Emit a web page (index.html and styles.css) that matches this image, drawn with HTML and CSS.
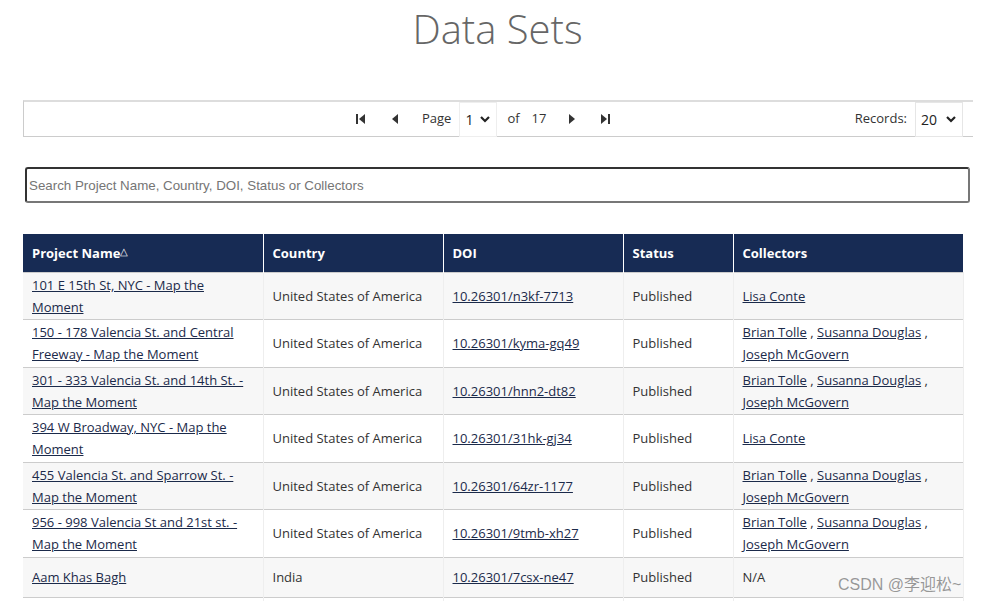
FILE: index.html
```html
<!DOCTYPE html>
<html>
<head>
<meta charset="utf-8">
<link rel="stylesheet" href="styles.css">
</head>
<body>
<div class="page">
  <h1 class="title">Data Sets</h1>
  <div class="pager">
    <div class="pager-center">
      <span class="pbtn"><svg width="10" height="10" viewBox="0 0 10 10"><rect x="0" y="0" width="2" height="10" fill="#333"/><polygon points="9,0 9,10 3,5" fill="#333"/></svg></span>
      <span class="pbtn"><svg width="7" height="10" viewBox="0 0 7 10"><polygon points="6,0 6,10 0,5" fill="#333"/></svg></span>
      <span class="plabel page-label">Page</span>
      <span class="psel">1<svg class="chev" width="10" height="7" viewBox="0 0 10 7"><polyline points="1,1 5,5 9,1" fill="none" stroke="#222" stroke-width="2.2"/></svg></span>
      <span class="plabel of-label">of</span>
      <span class="plabel num">17</span>
      <span class="pbtn"><svg width="7" height="10" viewBox="0 0 7 10"><polygon points="1,0 1,10 7,5" fill="#333"/></svg></span>
      <span class="pbtn"><svg width="10" height="10" viewBox="0 0 10 10"><polygon points="1,0 1,10 7,5" fill="#333"/><rect x="8" y="0" width="2" height="10" fill="#333"/></svg></span>
    </div>
    <div class="records">
      <span class="plabel">Records:</span>
      <span class="psel rsel">20<svg class="chev" width="10" height="7" viewBox="0 0 10 7"><polyline points="1,1 5,5 9,1" fill="none" stroke="#222" stroke-width="2.2"/></svg></span>
    </div>
  </div>
  <input class="search" type="text" placeholder="Search Project Name, Country, DOI, Status or Collectors">
  <table class="grid">
    <thead>
      <tr>
        <th class="c1">Project Name<span class="sort">&#9651;</span></th>
        <th class="c2">Country</th>
        <th class="c3">DOI</th>
        <th class="c4">Status</th>
        <th class="c5">Collectors</th>
      </tr>
    </thead>
    <tbody>
      <tr class="odd">
        <td><a href="#">101 E 15th St, NYC - Map the Moment</a></td>
        <td>United States of America</td>
        <td><a href="#">10.26301/n3kf-7713</a></td>
        <td>Published</td>
        <td><a href="#">Lisa Conte</a></td>
      </tr>
      <tr>
        <td><a href="#">150 - 178 Valencia St. and Central Freeway - Map the Moment</a></td>
        <td>United States of America</td>
        <td><a href="#">10.26301/kyma-gq49</a></td>
        <td>Published</td>
        <td><a href="#">Brian Tolle</a> , <a href="#">Susanna Douglas</a> , <a href="#">Joseph McGovern</a></td>
      </tr>
      <tr class="odd">
        <td><a href="#">301 - 333 Valencia St. and 14th St. - Map the Moment</a></td>
        <td>United States of America</td>
        <td><a href="#">10.26301/hnn2-dt82</a></td>
        <td>Published</td>
        <td><a href="#">Brian Tolle</a> , <a href="#">Susanna Douglas</a> , <a href="#">Joseph McGovern</a></td>
      </tr>
      <tr>
        <td><a href="#">394 W Broadway, NYC - Map the Moment</a></td>
        <td>United States of America</td>
        <td><a href="#">10.26301/31hk-gj34</a></td>
        <td>Published</td>
        <td><a href="#">Lisa Conte</a></td>
      </tr>
      <tr class="odd">
        <td><a href="#">455 Valencia St. and Sparrow St. - Map the Moment</a></td>
        <td>United States of America</td>
        <td><a href="#">10.26301/64zr-1177</a></td>
        <td>Published</td>
        <td><a href="#">Brian Tolle</a> , <a href="#">Susanna Douglas</a> , <a href="#">Joseph McGovern</a></td>
      </tr>
      <tr>
        <td><a href="#">956 - 998 Valencia St and 21st st. - Map the Moment</a></td>
        <td>United States of America</td>
        <td><a href="#">10.26301/9tmb-xh27</a></td>
        <td>Published</td>
        <td><a href="#">Brian Tolle</a> , <a href="#">Susanna Douglas</a> , <a href="#">Joseph McGovern</a></td>
      </tr>
      <tr class="odd">
        <td><a href="#">Aam Khas Bagh</a></td>
        <td>India</td>
        <td><a href="#">10.26301/7csx-ne47</a></td>
        <td>Published</td>
        <td>N/A</td>
      </tr>
      <tr class="blank">
        <td></td><td></td><td></td><td></td><td></td>
      </tr>
    </tbody>
  </table>
</div>
<div class="watermark">CSDN @李迎松~</div>
</body>
</html>
```

FILE: styles.css
```css
html, body {
  margin: 0;
  padding: 0;
  background: #fff;
  overflow: hidden;
}
body {
  font-family: "Open Sans", "Noto Sans", sans-serif;
  color: #333;
  width: 995px;
  height: 601px;
  position: relative;
}
.page {
  padding: 0 0 0 23px;
}
.title {
  margin: 0 0 0 -23px;
  padding-top: 2px;
  height: 98px;
  text-align: center;
  font-weight: 300;
  font-size: 40px;
  line-height: 54px;
  color: #666;
}
.pager {
  box-sizing: border-box;
  width: 950px;
  height: 37px;
  border-top: 2px solid #ddd;
  border-left: 1px solid #ccc;
  border-bottom: 1px solid #ccc;
  display: flex;
  align-items: stretch;
  position: relative;
  font-size: 13px;
}
.pager-center {
  position: absolute;
  left: 320px;
  top: 0;
  bottom: 0;
  display: flex;
  align-items: center;
}
.pbtn {
  display: inline-flex;
  align-items: center;
  justify-content: center;
  width: 34px;
  height: 100%;
}
.plabel {
  color: #333;
  margin: 0 6px;
  position: relative;
  top: -1px;
}
.page-label {
  margin-left: 10px;
  margin-right: 8px;
}
.of-label {
  margin-left: 10px;
  margin-right: 6px;
}
.num {
  margin-left: 6px;
  margin-right: 8px;
}
.psel {
  box-sizing: border-box;
  display: inline-flex;
  align-items: center;
  height: 35px;
  border: 1px solid #eee;
  padding: 0 6px 0 5px;
  color: #222;
  font-size: 14px;
  width: 38px;
  justify-content: space-between;
}
.chev {
  display: block;
}
.records {
  margin-left: auto;
  margin-right: 10px;
  display: flex;
  align-items: center;
}
.rsel {
  width: 48px;
  margin-left: 2px;
  padding-left: 5px;
  padding-right: 6px;
  border-color: #e6e6e6;
}
.search {
  display: block;
  box-sizing: border-box;
  margin: 30px 0 0 2px;
  width: 945px;
  height: 36px;
  border: 2px solid #333;
  border-right-color: #777;
  border-bottom-color: #777;
  border-radius: 3px;
  padding: 0 2px;
  font-family: "Liberation Sans", Arial, sans-serif;
  font-size: 13.33px;
  color: #333;
  outline: none;
}
.search::placeholder {
  color: #757575;
}
.grid {
  margin-top: 31px;
  width: 940px;
  border-collapse: collapse;
  table-layout: fixed;
  font-size: 13px;
}
.grid th {
  background: #172b54;
  color: #fff;
  font-weight: 700;
  text-align: left;
  height: 38px;
  padding: 0 9px;
  border-left: 1px solid #fff;
  box-sizing: border-box;
}
.grid th:first-child {
  border-left: none;
}
.c1 { width: 240px; }
.c2 { width: 180px; }
.c3 { width: 180px; }
.c4 { width: 110px; }
.c5 { width: 230px; }
.sort {
  font-size: 10px;
  font-weight: 400;
  position: relative;
  top: -3px;
}
.grid td {
  border-top: 1px solid #ccc;
  border-left: 1px solid #eee;
  padding: 1px 9px 1.5px;
  height: 36.5px;
  line-height: 22px;
  vertical-align: middle;
  color: #333;
}
.grid td:first-child {
  border-left: none;
}
.grid td:last-child {
  border-right: 1px solid #eee;
}
.grid tr.odd td {
  background: #f7f7f7;
}
.grid a {
  color: #1b2a4a;
  text-decoration: underline;
}
.watermark {
  position: absolute;
  left: 838px;
  top: 571px;
  font-family: "Liberation Sans", "Noto Sans CJK SC", sans-serif;
  font-size: 16px;
  color: rgba(120, 120, 120, 0.75);
}
```
